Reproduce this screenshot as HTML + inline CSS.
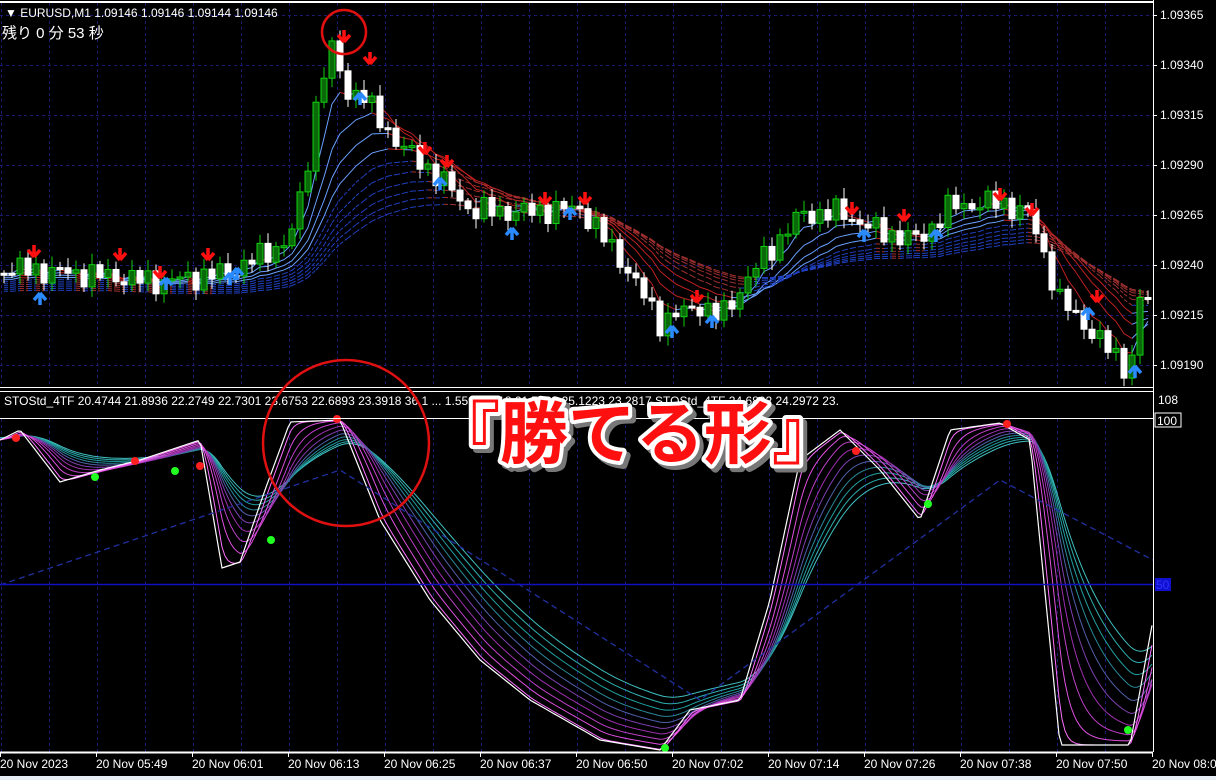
<!DOCTYPE html>
<html><head><meta charset="utf-8">
<style>
html,body{margin:0;padding:0;background:#000;width:1216px;height:780px;overflow:hidden}
svg{display:block}
text{font-family:"Liberation Sans","Noto Sans CJK JP",sans-serif}
</style></head><body>
<svg id="s" width="1216" height="780" xmlns="http://www.w3.org/2000/svg">
<rect width="1216" height="780" fill="#000"/>
<g id="grid"></g>
<g id="top"></g>
<g id="ind"></g>
<line x1="0" y1="2" x2="1153" y2="2" stroke="#fff" stroke-width="2"/>
<line x1="1153.5" y1="0" x2="1153.5" y2="752" stroke="#fff"/>
<line x1="0" y1="387.5" x2="1153" y2="387.5" stroke="#fff"/>
<line x1="0" y1="391.5" x2="1153" y2="391.5" stroke="#fff"/>
<line x1="0" y1="418.5" x2="1153" y2="418.5" stroke="#fff"/>
<line x1="0" y1="584.5" x2="1153" y2="584.5" stroke="#1010c0" stroke-width="1.5"/>
<line x1="0" y1="752.5" x2="1153" y2="752.5" stroke="#fff" stroke-width="2"/>
<rect x="0" y="776" width="1216" height="4" fill="#e8eef6"/>
<g id="labels" font-size="12" fill="#fff"></g>
<text x="5" y="17" font-size="12" fill="#fff">▼ EURUSD,M1  1.09146 1.09146 1.09144 1.09146</text>
<text x="2" y="38" font-size="15" fill="#fff">残り  0 分  53 秒</text>
<text x="4" y="405" font-size="12" fill="#fff">STOStd_4TF 20.4744 21.8936 22.2749 22.7301 23.6753 22.6893 23.3918 36.1 ... 1.5592 ... 18 21.7133 25.1223 23.2817   STOStd_4TF 24.6892 24.2972 23.</text>
<text x="1158" y="404" font-size="12" fill="#fff">108</text>
<rect x="1155" y="413" width="26" height="14" fill="#000" stroke="#fff"/>
<text x="1157" y="425" font-size="12" fill="#fff">100</text>
<rect x="1155" y="578" width="16" height="13" fill="#1010d0"/>
<text x="1156" y="589" font-size="12" fill="#3030ff">50</text>
<circle cx="344" cy="32" r="22" fill="none" stroke="#e01010" stroke-width="2.5"/>
<circle cx="346" cy="443" r="83" fill="none" stroke="#e01010" stroke-width="2.5"/>
<g font-size="68" font-weight="bold" font-family="'Noto Sans CJK JP',sans-serif">
<text x="432" y="458" fill="#777" stroke="#777" stroke-width="8" stroke-linejoin="round" transform="translate(4,4)">『勝てる形』</text>
<text x="432" y="458" fill="#fff" stroke="#fff" stroke-width="8" stroke-linejoin="round">『勝てる形』</text>
<text x="432" y="458" fill="#ff1010">『勝てる形』</text>
</g>
</svg>
<script>
const NS="http://www.w3.org/2000/svg";
function el(p,t,a){const e=document.createElementNS(NS,t);for(const k in a)e.setAttribute(k,a[k]);p.appendChild(e);return e;}
const G=document.getElementById('grid'),T=document.getElementById('top'),I=document.getElementById('ind'),L=document.getElementById('labels');
for(let x=1;x<1153;x+=48){el(G,'line',{x1:x+.5,y1:3,x2:x+.5,y2:387,stroke:'#1a1a70','stroke-dasharray':'3 3'});el(G,'line',{x1:x+.5,y1:419,x2:x+.5,y2:752,stroke:'#1a1a70','stroke-dasharray':'3 3'});}
const prices=['1.09365','1.09340','1.09315','1.09290','1.09265','1.09240','1.09215','1.09190'];
for(let i=0;i<8;i++){const y=15+i*50;el(G,'line',{x1:0,y1:y+.5,x2:1153,y2:y+.5,stroke:'#1a1a70','stroke-dasharray':'3 3'});
 const t=el(L,'text',{x:1160,y:y+4});t.textContent=prices[i];el(L,'line',{x1:1153,y1:y+.5,x2:1157,y2:y+.5,stroke:'#fff'});}
const times=['20 Nov 2023','20 Nov 05:49','20 Nov 06:01','20 Nov 06:13','20 Nov 06:25','20 Nov 06:37','20 Nov 06:50','20 Nov 07:02','20 Nov 07:14','20 Nov 07:26','20 Nov 07:38','20 Nov 07:50','20 Nov 08:0'];
times.forEach((s,i)=>{const x=i*96;const t=el(L,'text',{x:x,y:768});t.textContent=s;el(L,'line',{x1:x+.5,y1:752,x2:x+.5,y2:757,stroke:'#fff'});});
function interp(pts,x){for(let i=1;i<pts.length;i++){if(x<=pts[i][0]){const a=pts[i-1],b=pts[i];return a[1]+(b[1]-a[1])*(x-a[0])/(b[0]-a[0]);}}return pts[pts.length-1][1];}
const P=[[0,268],[60,272],[100,275],[160,282],[230,272],[290,240],[305,180],[320,80],[335,45],[345,95],[360,90],[372,110],[400,145],[440,178],[470,210],[520,212],[580,208],[620,258],[660,322],[700,305],[720,318],[760,262],[800,215],[840,212],[880,232],[920,240],[950,206],[1000,202],[1030,215],[1060,300],[1100,340],[1130,372],[1140,300],[1153,300]];
const N=Math.floor(1153/8);const c=[];for(let i=0;i<N;i++){const x=i*8+4;c.push(interp(P,x)+Math.sin(i*2.7)*9+Math.cos(i*1.3)*5);}
for(let k=0;k<10;k++){const a=0.35/(1+k*0.7);let m=c[0];let prev=null;for(let i=0;i<N;i++){m+=a*(c[i]-m);const y=m+k*2;const x=i*8+4;
 if(prev){const red=m<c[i]-2;const col=red?(k<4?'#c02020':'#a03030'):(k<4?'#6aa0ff':'#2040c0');el(T,'line',{x1:prev[0],y1:prev[1],x2:x,y2:y,stroke:col,'stroke-width':1,'stroke-dasharray':k>=4?'4 2':''});}prev=[x,y];}}
for(let i=0;i<N;i++){const x=i*8+4;const o=i?c[i-1]:c[0];const cl=c[i];const hi=Math.min(o,cl)-3-Math.abs(Math.sin(i*1.3))*8,lo=Math.max(o,cl)+3+Math.abs(Math.cos(i*1.7))*7;
 const up=cl<o;const col=up?'#10d010':'#fff';el(T,'line',{x1:x,y1:hi,x2:x,y2:lo,stroke:col});
 const h=Math.max(2,Math.abs(cl-o));el(T,'rect',{x:x-3,y:Math.min(o,cl),width:6,height:h,fill:up?'#0a6a0a':'#fff',stroke:col});}
function arrow(x,y,dn){const col=dn?'#ff1010':'#2a8aff';const d=dn?`M${x} ${y+12}L${x-6} ${y+5}M${x} ${y+12}L${x+6} ${y+5}M${x} ${y+12}V${y}`:`M${x} ${y}L${x-6} ${y+7}M${x} ${y}L${x+6} ${y+7}M${x} ${y}V${y+12}`;el(T,'path',{d:d,stroke:col,'stroke-width':3.5,fill:'none'});}
[[344,30],[370,52],[34,245],[120,248],[160,266],[208,248],[425,142],[447,155],[545,192],[585,192],[697,290],[852,202],[904,209],[1000,188],[1032,203],[1097,290]].forEach(p=>arrow(p[0],p[1],true));
[[40,293],[166,278],[230,273],[237,268],[360,93],[440,178],[512,228],[570,208],[672,326],[712,316],[864,230],[936,230],[1088,308],[1135,366]].forEach(p=>arrow(p[0],p[1],false));
const S=[[0,440],[20,430],[60,482],[100,470],[140,460],[200,440],[222,568],[240,562],[265,490],[290,422],[340,420],[380,520],[430,600],[480,660],[530,700],[600,740],[660,750],[690,710],[740,700],[770,600],[800,460],[840,430],[880,470],[920,520],[950,430],[1000,423],[1030,440],[1060,745],[1100,745],[1130,745],[1153,620]];
const sv=[];for(let x=0;x<=1153;x+=3)sv.push(interp(S,x));
const cols=['#ff70ff','#e050e0','#c040c8','#a030b0','#8040b0','#5060a8','#2a8a9a','#20a0a0','#30b0b0','#40c0c0'];
for(let k=cols.length-1;k>=0;k--){const a=0.45/(1+k*0.9);let m=sv[0];let d='';for(let i=0;i<sv.length;i++){m+=a*(sv[i]-m);const y=Math.min(750,Math.max(420,m*(1-k*0.012)+k*5));d+=(i?'L':'M')+(i*3)+' '+y.toFixed(1);}el(I,'path',{d:d,stroke:cols[k],fill:'none','stroke-width':1});}
{let d='';sv.forEach((y,i)=>d+=(i?'L':'M')+(i*3)+' '+y.toFixed(1));el(I,'path',{d:d,stroke:'#fff',fill:'none','stroke-width':1.2});}
el(I,'path',{d:'M0 585L340 470L700 700L1000 480L1153 560',stroke:'#2030a0',fill:'none','stroke-dasharray':'6 4','stroke-width':1.3});
[[16,438,'#ff2020'],[135,461,'#ff2020'],[200,466,'#ff2020'],[337,419,'#ff2020'],[856,451,'#ff2020'],[1007,424,'#ff2020'],[95,477,'#20ff20'],[175,471,'#20ff20'],[271,540,'#20ff20'],[665,748,'#20ff20'],[928,504,'#20ff20'],[1128,730,'#20ff20']].forEach(p=>el(I,'circle',{cx:p[0],cy:p[1],r:4,fill:p[2]}));
</script>
</body></html>
